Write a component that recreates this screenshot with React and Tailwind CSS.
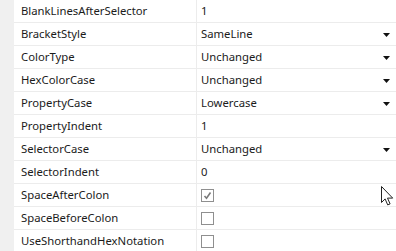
import React from 'react';

const rows = [
  { name: 'BlankLinesAfterSelector', value: '1' },
  { name: 'BracketStyle', value: 'SameLine', dropdown: true },
  { name: 'ColorType', value: 'Unchanged', dropdown: true },
  { name: 'HexColorCase', value: 'Unchanged', dropdown: true },
  { name: 'PropertyCase', value: 'Lowercase', dropdown: true },
  { name: 'PropertyIndent', value: '1' },
  { name: 'SelectorCase', value: 'Unchanged', dropdown: true },
  { name: 'SelectorIndent', value: '0' },
  { name: 'SpaceAfterColon', check: true, checked: true },
  { name: 'SpaceBeforeColon', check: true },
  { name: 'UseShorthandHexNotation', check: true },
];

const Arrow = () => (
  <svg width="7" height="4" viewBox="0 0 7 4" className="mr-[6px]">
    <path d="M0 0h7L3.5 4z" fill="#111" />
  </svg>
);

const Checkbox = ({ checked }) => (
  <div className="w-[13px] h-[13px] border border-[#8f8f8f] bg-white flex items-center justify-center">
    {checked && (
      <svg width="9" height="9" viewBox="0 0 9 9">
        <path d="M1.5 5l2 2.2L7.5 1.5" fill="none" stroke="#7a7a7a" strokeWidth="1.6" />
      </svg>
    )}
  </div>
);

export default function App() {
  return (
    <div className="relative w-[396px] h-[251px] overflow-hidden bg-white flex text-[11.3px] text-[#1b1b1b]" style={{ fontFamily: '"Noto Sans", "Open Sans", sans-serif' }}>
      <div className="w-[14px] shrink-0 bg-[#f0f0f0]" />
      <div className="flex-1 flex flex-col">
        {rows.map((row) => (
          <div key={row.name} className="flex h-[23px] shrink-0 border-b border-[#ececec]">
            <div className="w-[183px] shrink-0 border-r border-[#ececec] pl-[7px] pt-[1px] flex items-center">
              {row.name}
            </div>
            <div className="flex-1 pl-[4px] pt-[1px] flex items-center justify-between">
              {row.check ? <Checkbox checked={row.checked} /> : <span>{row.value}</span>}
              {row.dropdown && <Arrow />}
            </div>
          </div>
        ))}
      </div>
      <svg className="absolute left-[381px] top-[186px]" width="13" height="20" viewBox="0 0 13 20">
        <path d="M0.5 0.5v16l3.6-3.6 2.6 6 2.4-1-2.6-5.8h5.2z" fill="#fff" stroke="#222" strokeWidth="1" />
      </svg>
    </div>
  );
}
